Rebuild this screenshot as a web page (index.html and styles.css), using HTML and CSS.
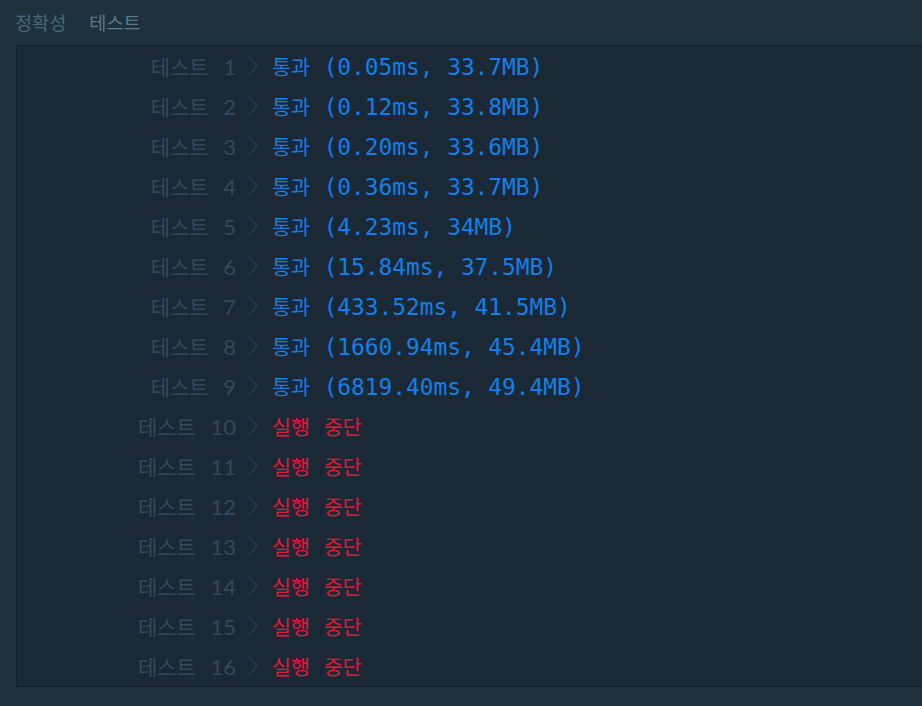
FILE: index.html
```html
<!DOCTYPE html>
<html lang="ko">
<head>
<meta charset="utf-8">
<title>테스트 결과</title>
<link rel="stylesheet" href="styles.css">
</head>
<body>
<div class="page">
  <div class="tabs">
    <span class="tab">정확성</span>
    <span class="tab tab-active">테스트</span>
  </div>
  <div class="console">
    <div class="row"><span class="label"><span class="ko-l">테스트</span> 1</span><svg class="chev" viewBox="0 0 10 20"><path d="M1 1 L9 10 L1 19"/></svg><span class="res pass"><span class="ko">통과</span> (0.05ms, 33.7MB)</span></div>
    <div class="row"><span class="label"><span class="ko-l">테스트</span> 2</span><svg class="chev" viewBox="0 0 10 20"><path d="M1 1 L9 10 L1 19"/></svg><span class="res pass"><span class="ko">통과</span> (0.12ms, 33.8MB)</span></div>
    <div class="row"><span class="label"><span class="ko-l">테스트</span> 3</span><svg class="chev" viewBox="0 0 10 20"><path d="M1 1 L9 10 L1 19"/></svg><span class="res pass"><span class="ko">통과</span> (0.20ms, 33.6MB)</span></div>
    <div class="row"><span class="label"><span class="ko-l">테스트</span> 4</span><svg class="chev" viewBox="0 0 10 20"><path d="M1 1 L9 10 L1 19"/></svg><span class="res pass"><span class="ko">통과</span> (0.36ms, 33.7MB)</span></div>
    <div class="row"><span class="label"><span class="ko-l">테스트</span> 5</span><svg class="chev" viewBox="0 0 10 20"><path d="M1 1 L9 10 L1 19"/></svg><span class="res pass"><span class="ko">통과</span> (4.23ms, 34MB)</span></div>
    <div class="row"><span class="label"><span class="ko-l">테스트</span> 6</span><svg class="chev" viewBox="0 0 10 20"><path d="M1 1 L9 10 L1 19"/></svg><span class="res pass"><span class="ko">통과</span> (15.84ms, 37.5MB)</span></div>
    <div class="row"><span class="label"><span class="ko-l">테스트</span> 7</span><svg class="chev" viewBox="0 0 10 20"><path d="M1 1 L9 10 L1 19"/></svg><span class="res pass"><span class="ko">통과</span> (433.52ms, 41.5MB)</span></div>
    <div class="row"><span class="label"><span class="ko-l">테스트</span> 8</span><svg class="chev" viewBox="0 0 10 20"><path d="M1 1 L9 10 L1 19"/></svg><span class="res pass"><span class="ko">통과</span> (1660.94ms, 45.4MB)</span></div>
    <div class="row"><span class="label"><span class="ko-l">테스트</span> 9</span><svg class="chev" viewBox="0 0 10 20"><path d="M1 1 L9 10 L1 19"/></svg><span class="res pass"><span class="ko">통과</span> (6819.40ms, 49.4MB)</span></div>
    <div class="row"><span class="label"><span class="ko-l">테스트</span> 10</span><svg class="chev" viewBox="0 0 10 20"><path d="M1 1 L9 10 L1 19"/></svg><span class="res fail"><span class="ko">실행</span> <span class="ko">중단</span></span></div>
    <div class="row"><span class="label"><span class="ko-l">테스트</span> 11</span><svg class="chev" viewBox="0 0 10 20"><path d="M1 1 L9 10 L1 19"/></svg><span class="res fail"><span class="ko">실행</span> <span class="ko">중단</span></span></div>
    <div class="row"><span class="label"><span class="ko-l">테스트</span> 12</span><svg class="chev" viewBox="0 0 10 20"><path d="M1 1 L9 10 L1 19"/></svg><span class="res fail"><span class="ko">실행</span> <span class="ko">중단</span></span></div>
    <div class="row"><span class="label"><span class="ko-l">테스트</span> 13</span><svg class="chev" viewBox="0 0 10 20"><path d="M1 1 L9 10 L1 19"/></svg><span class="res fail"><span class="ko">실행</span> <span class="ko">중단</span></span></div>
    <div class="row"><span class="label"><span class="ko-l">테스트</span> 14</span><svg class="chev" viewBox="0 0 10 20"><path d="M1 1 L9 10 L1 19"/></svg><span class="res fail"><span class="ko">실행</span> <span class="ko">중단</span></span></div>
    <div class="row"><span class="label"><span class="ko-l">테스트</span> 15</span><svg class="chev" viewBox="0 0 10 20"><path d="M1 1 L9 10 L1 19"/></svg><span class="res fail"><span class="ko">실행</span> <span class="ko">중단</span></span></div>
    <div class="row"><span class="label"><span class="ko-l">테스트</span> 16</span><svg class="chev" viewBox="0 0 10 20"><path d="M1 1 L9 10 L1 19"/></svg><span class="res fail"><span class="ko">실행</span> <span class="ko">중단</span></span></div>
  </div>
</div>
</body>
</html>
```

FILE: styles.css
```css
html, body {
  margin: 0;
  padding: 0;
  background: #1f313d;
  height: 100%;
  overflow: hidden;
}

.page {
  padding: 0 0 0 16px;
  width: 940px;
}

.tabs {
  display: flex;
  gap: 23px;
  height: 45px;
  align-items: center;
  margin-left: -1px;
  font-family: "Noto Sans CJK KR", sans-serif;
  font-size: 18.6px;
  line-height: 1;
  padding-bottom: 1px;
  box-sizing: border-box;
}

.tab {
  color: #4a6878;
}

.tab-active {
  color: #567b8a;
}

.console {
  background: #1b2835;
  border: 1px solid #15202a;
  display: flex;
  flex-direction: column;
}

.row {
  height: 40px;
  display: flex;
  align-items: center;
  padding-bottom: 1px;
  box-sizing: border-box;
}

.label {
  width: 219px;
  text-align: right;
  font-family: "Lato", "Noto Sans CJK KR", sans-serif;
  font-size: 22px;
  word-spacing: 9px;
  color: #36495a;
  white-space: pre;
}

.ko-l {
  font-family: "Noto Sans CJK KR", sans-serif;
  font-size: 21px;
  word-spacing: 0;
}

.chev {
  width: 10px;
  height: 20px;
  margin-left: 12px;
  margin-right: 14px;
  fill: none;
  stroke: #2a3a4a;
  stroke-width: 1.4;
}

.res {
  font-family: "DejaVu Sans Mono", "Noto Sans CJK KR", monospace;
  font-size: 22.8px;
  white-space: pre;
}

.ko {
  font-family: "Noto Sans CJK KR", sans-serif;
  font-size: 20.6px;
  word-spacing: 0;
}

.pass {
  color: #1180ea;
}

.fail {
  color: #e8163a;
}
```
